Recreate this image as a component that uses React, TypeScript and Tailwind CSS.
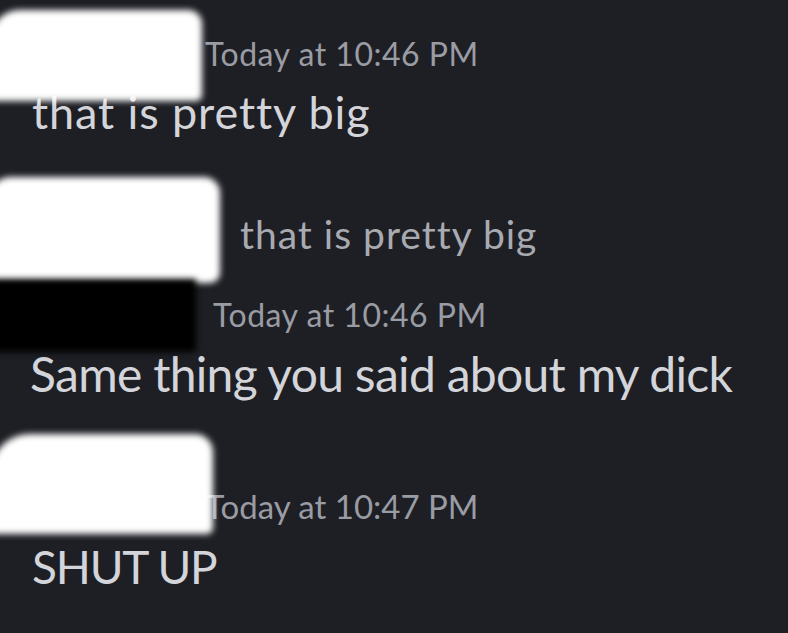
import React from "react";

// redaction scribbles lie over the names, so they sit on top of the flow
const Blob = ({ className }: { className: string }) => (
  <div className={`absolute blur-[3px] ${className}`} />
);

export default function App() {
  return (
    <div
      className="relative w-[788px] h-[633px] overflow-hidden bg-[#1e1f24] [font-variant-ligatures:none]"
      style={{ fontFamily: "Lato, 'Noto Sans', sans-serif" }}
    >
      <div className="flex flex-col pl-[32px]">
        <div className="mt-[38px] h-[32px] pl-[173px] text-[32px] leading-none text-[#9a9ca4] tracking-[0.5px]">
          Today at 10:46 PM
        </div>
        <div className="mt-[20px] h-[45px] text-[45px] leading-none text-[#d3d5da] tracking-[0.9px]">
          that is pretty big
        </div>

        <div className="mt-[80px] h-[39px] pl-[208px] text-[39px] leading-none text-[#a8aab1] tracking-[1px]">
          that is pretty big
        </div>
        <div className="mt-[45px] h-[32px] pl-[181px] text-[32px] leading-none text-[#9a9ca4] tracking-[0.5px]">
          Today at 10:46 PM
        </div>
        <div className="mt-[19px] -ml-[2px] h-[48px] text-[48px] leading-none text-[#d3d5da] tracking-[-0.7px]">
          Same thing you said about my dick
        </div>

        <div className="mt-[92px] h-[33px] pl-[173px] text-[33px] leading-none text-[#9a9ca4]">
          Today at 10:47 PM
        </div>
        <div className="mt-[21px] h-[46px] text-[46px] leading-none text-[#d3d5da] tracking-[-1.2px]">
          SHUT UP
        </div>
      </div>

      <Blob className="left-[-10px] top-[10px] w-[212px] h-[91px] bg-white rounded-tr-[14px] rounded-br-[6px] rounded-tl-[30px]" />
      <Blob className="left-[-10px] top-[177px] w-[230px] h-[106px] bg-white rounded-tr-[16px] rounded-br-[10px] rounded-tl-[20px]" />
      <Blob className="left-[-10px] top-[279px] w-[206px] h-[73px] bg-black rounded-br-[4px]" />
      <Blob className="left-[-10px] top-[434px] w-[223px] h-[100px] bg-white rounded-tr-[18px] rounded-br-[6px] rounded-tl-[40px]" />
    </div>
  );
}
